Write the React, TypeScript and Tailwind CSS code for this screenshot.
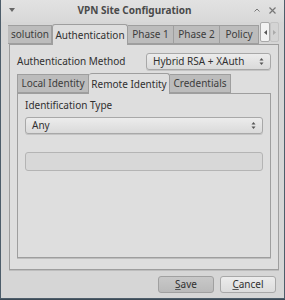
import React from "react";

function Spin() {
  return (
    <svg width="5" height="9" viewBox="0 0 5 9" className="shrink-0">
      <path d="M2.5 1 L4.5 3.5 L0.5 3.5 Z" fill="#555" />
      <path d="M2.5 8 L4.5 5.5 L0.5 5.5 Z" fill="#555" />
    </svg>
  );
}

function Select({ value, className }: { value: string; className: string }) {
  return (
    <div
      className={`flex items-center justify-between rounded-[3px] border border-[#a8a8a8] bg-gradient-to-b from-[#ececec] to-[#dadada] pl-[6px] pr-[6px] text-[#303030] shadow-[0_1px_0_#c4c4c4] ${className}`}
    >
      <span className="whitespace-nowrap">{value}</span>
      <Spin />
    </div>
  );
}

function Tab({
  label,
  active,
  className = "",
}: {
  label: string;
  active?: boolean;
  className?: string;
}) {
  return (
    <div
      className={`flex items-center justify-center whitespace-nowrap border border-[#9e9e9e] ${
        active
          ? "relative z-10 -mb-px h-[21px] rounded-t-[3px] border-b-0 bg-[#dedede] text-[#303030]"
          : "h-[19px] bg-[#bcbcbc] text-[#3c3c3c]"
      } ${className}`}
    >
      {label}
    </div>
  );
}

export default function App() {
  return (
    <div
      className="h-[300px] w-[285px] bg-[#3c4a56] text-[10px]"
      style={{ fontFamily: '"Noto Sans", "DejaVu Sans", sans-serif' }}
    >
      <div className="flex h-[299px] w-[285px] flex-col border border-t-0 border-[#4d5d6a] bg-[#d6d6d6]">
        {/* title bar */}
        <div className="flex h-[22px] items-center bg-gradient-to-b from-[#e2e2e2] to-[#d8d8d8] px-[8px] pb-[2px] text-[#4a4a4a]">
          <svg width="6" height="4" viewBox="0 0 6 4">
            <path d="M0 0 L6 0 L3 4 Z" fill="#666" />
          </svg>
          <div className="flex-1 text-center text-[10px] font-bold">VPN Site Configuration</div>
          <svg width="6" height="4" viewBox="0 0 6 4" className="mr-[9px]">
            <path d="M0.5 3.5 L3 1 L5.5 3.5" stroke="#777" fill="none" />
          </svg>
          <svg width="7" height="7" viewBox="0 0 7 7">
            <path d="M0.5 0.5 L6.5 6.5 M6.5 0.5 L0.5 6.5" stroke="#777" strokeWidth="1.2" />
          </svg>
        </div>

        {/* main tabs */}
        <div className="ml-[7px] mt-px flex h-[21px] w-[271px] items-end">
          <div className="flex h-[19px] w-[44px] items-center justify-end overflow-hidden whitespace-nowrap border border-l-0 border-[#9e9e9e] bg-[#bcbcbc] pr-[2px] text-[#3c3c3c]">
            solution
          </div>
          <Tab label="Authentication" active className="w-[76px]" />
          <Tab label="Phase 1" className="w-[46px] border-l-0" />
          <Tab label="Phase 2" className="w-[46px] border-l-0" />
          <Tab label="Policy" className="w-[39px] border-l-0" />
          <div className="mb-[2px] ml-px flex h-[20px] w-[10px] items-center justify-center rounded-[2px] border border-[#a8a8a8] bg-[#f2f2f2]">
            <svg width="3" height="5" viewBox="0 0 3 5">
              <path d="M3 0 L0 2.5 L3 5 Z" fill="#555" />
            </svg>
          </div>
          <div className="mb-[2px] flex h-[20px] w-[9px] items-center justify-center rounded-[2px] border border-[#c4c4c4] bg-[#d4d4d4]">
            <svg width="3" height="5" viewBox="0 0 3 5">
              <path d="M0 0 L3 2.5 L0 5 Z" fill="#aaa" />
            </svg>
          </div>
        </div>

        {/* pane */}
        <div className="ml-[8px] flex h-[226px] w-[270px] flex-col border border-[#9e9e9e] bg-[#dedede] px-[7px] shadow-[0_1px_0_#bdbdbd]">
          <div className="mt-[8px] flex items-center justify-between text-[#303030]">
            <span className="whitespace-nowrap">Authentication Method</span>
            <Select value="Hybrid RSA + XAuth" className="h-[17px] w-[125px]" />
          </div>

          <div className="mt-[3px] flex h-[20px] items-end">
            <Tab label="Local Identity" className="w-[72px]" />
            <Tab label="Remote Identity" active className="w-[81px] border-l-0" />
            <Tab label="Credentials" className="w-[61px] border-l-0" />
          </div>
          <div className="flex h-[165px] flex-col border border-[#9e9e9e] bg-[#dedede] px-[7px] shadow-[0_1px_0_#bdbdbd]">
            <div className="mt-[4px] text-[#303030]">Identification Type</div>
            <Select value="Any" className="mt-[4px] h-[17px] w-full" />
            <div className="mt-[18px] h-[19px] w-full rounded-[3px] border border-[#b4b4b4] bg-[#d8d8d8]" />
          </div>
        </div>

        {/* buttons */}
        <div className="mr-[8px] mt-[6px] flex justify-end gap-[6px]">
          <button className="h-[17px] w-[56px] rounded-[3px] border border-[#a0a0a0] bg-gradient-to-b from-[#c8c8c8] to-[#bababa] text-[10px] text-[#303030]">
            <span className="underline decoration-[#555]">S</span>ave
          </button>
          <button className="h-[17px] w-[56px] rounded-[3px] border border-[#a8a8a8] bg-gradient-to-b from-[#ececec] to-[#dcdcdc] text-[10px] text-[#303030]">
            <span className="underline decoration-[#555]">C</span>ancel
          </button>
        </div>
      </div>
    </div>
  );
}
